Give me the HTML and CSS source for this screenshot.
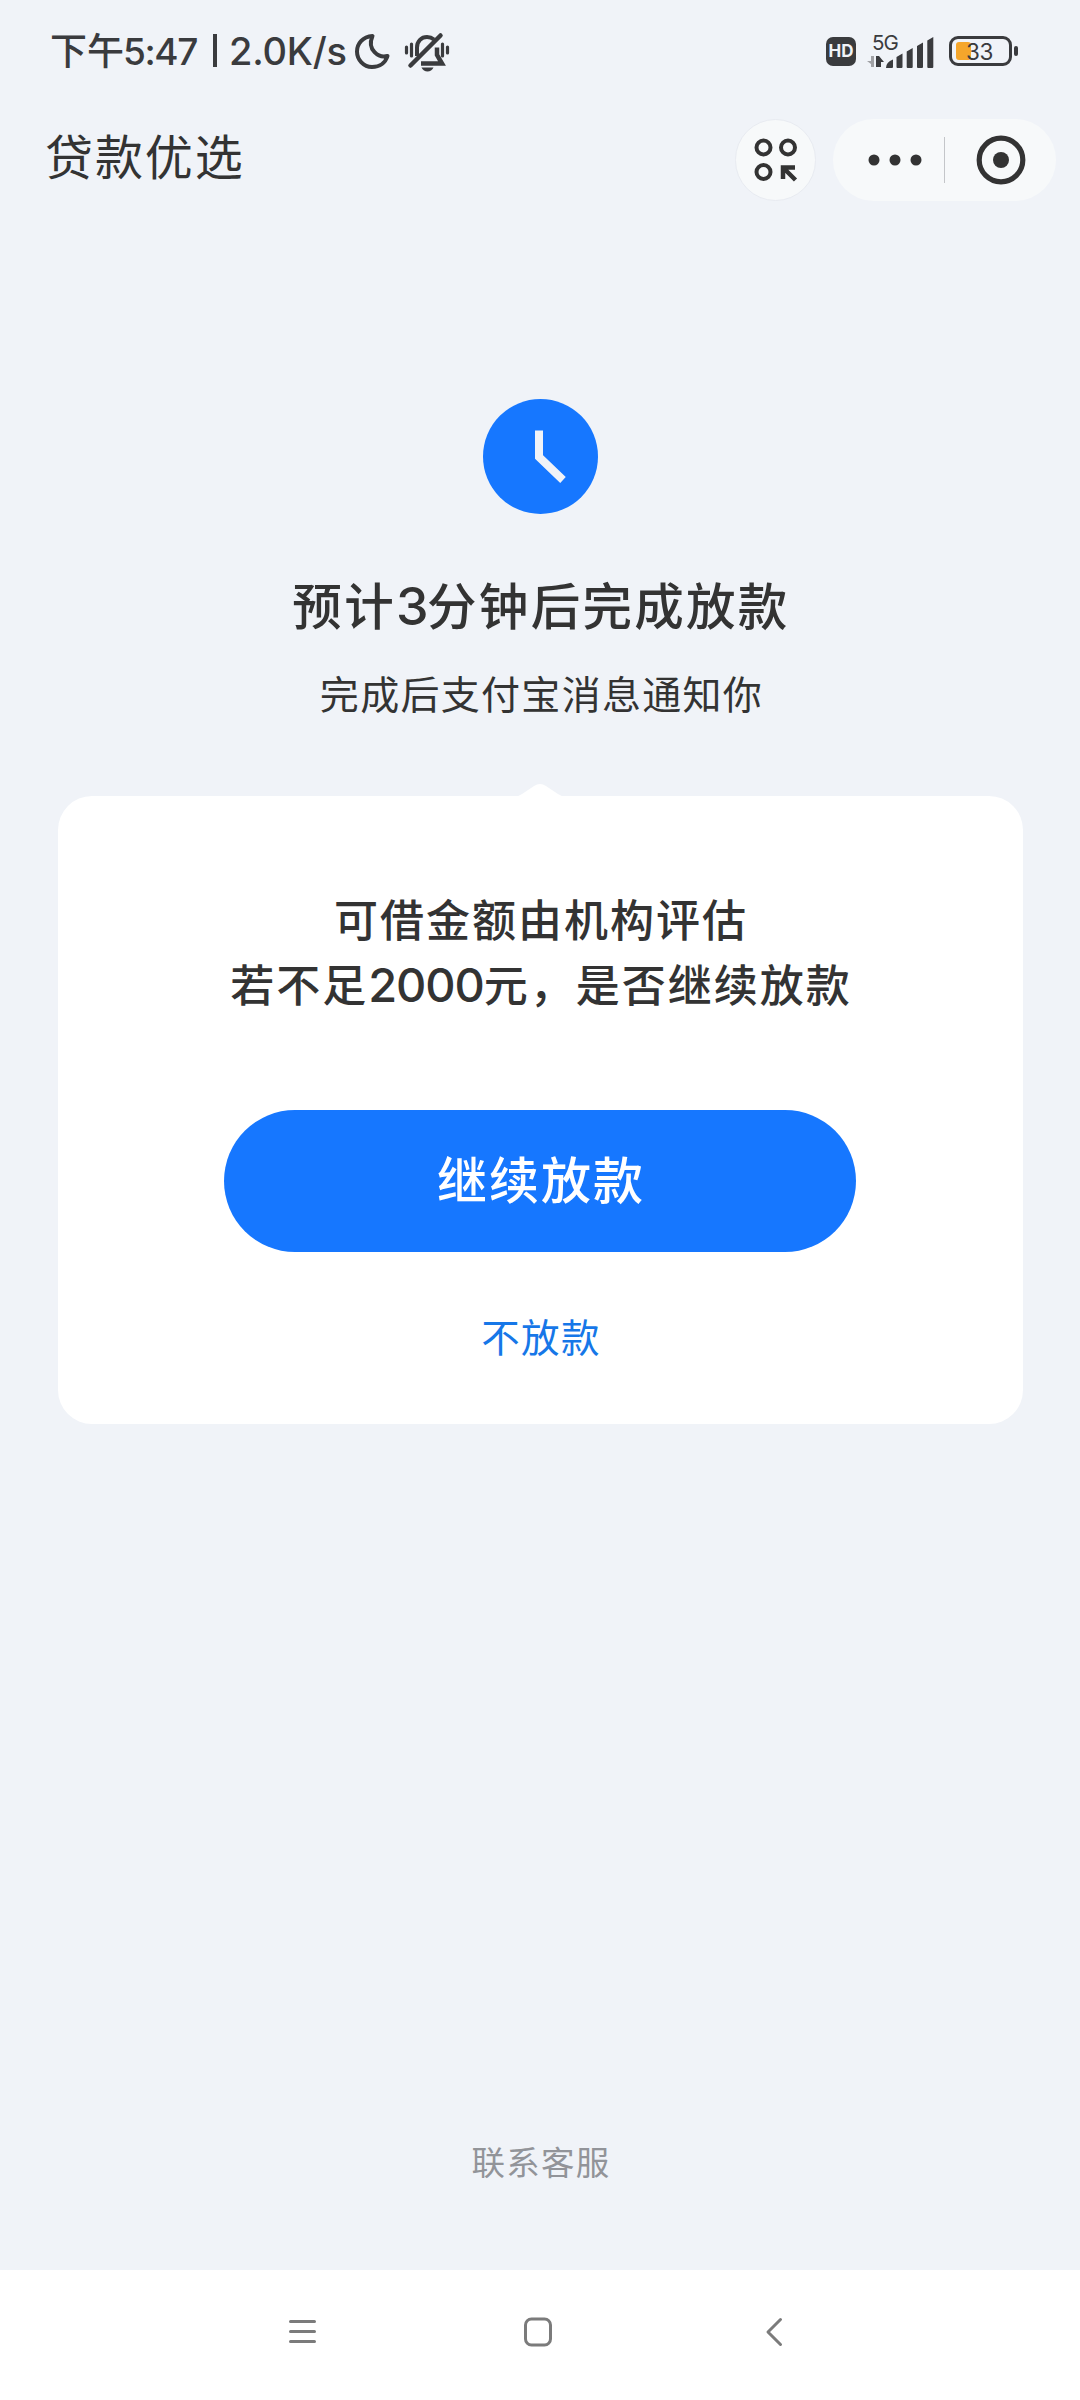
FILE: index.html
```html
<!DOCTYPE html>
<html lang="zh-CN">
<head>
<meta charset="utf-8">
<title>贷款优选</title>
<link rel="stylesheet" href="styles.css">
</head>
<body>
<div class="screen">
  <div class="status">
    <div class="status-left">
      <span class="ampm">下午</span><span class="time">5:47</span><span class="bar"></span><span class="speed">2.0K/s</span>
      <svg class="moon" width="36" height="38" viewBox="0 0 36 38"><path d="M18.500 4C8.500 4.500 3 12 3 19.500A15.500 15.500 0 0 0 18 35c8 0 13.500-4.500 15.500-11C25 26.500 12.500 18 18.500 4Z" fill="none" stroke="#3a3b3e" stroke-width="4" stroke-linejoin="round"/></svg>
      <svg class="bell" width="46" height="40" viewBox="0 0 46 40"><g fill="none" stroke="#3a3b3e" stroke-width="4"><path d="M6.500 33.500 36.500 3.500" stroke-width="4.500" stroke-linecap="round"/><path d="M13 24V15.500C13 9 17.500 5 23 5q4 0 7 2.500"/><path d="M33 15.500V23l5 8.500H17" stroke-width="4.500"/><path d="M2.500 15v6M7.500 12v12M38.500 12v12M43.500 15v6" stroke-width="3.200" stroke-linecap="round"/></g><path d="M17.500 35.500h12q-2 4-6 4t-6-4Z" fill="#3a3b3e"/></svg>
    </div>
    <div class="status-right">
      <span class="hd">HD</span>
      <div class="signal">
        <span class="net">5G</span>
        <svg width="68" height="36" viewBox="0 0 68 36"><path d="M7 23v11H4v-3L0 28h4v-5Z" fill="#a0a1a5"/><path d="M9 34V23h3l5 6h-3v5Z" fill="#3a3b3e"/><path d="M19 35q0-6 7-8.500V34q0 1-1 1ZM29.500 24l6-3.500V34q0 1-1 1h-4q-1 0-1-1ZM39.700 18.500l6-3.500V34q0 1-1 1h-4q-1 0-1-1ZM50 13l6-3.500V34q0 1-1 1h-4q-1 0-1-1ZM60.300 7.500l6-3.500V34q0 1-1 1h-4q-1 0-1-1Z" fill="#3a3b3e"/></svg>
      </div>
      <div class="battery"><span class="level"></span><span class="pct">33</span><span class="nub"></span></div>
    </div>
  </div>
  <header class="header">
    <h1 class="title">贷款优选</h1>
    <div class="actions">
      <button class="round"><svg width="44" height="44" viewBox="0 0 44 44"><g fill="none" stroke="#333" stroke-width="4"><circle cx="9.500" cy="9.500" r="7"/><circle cx="34" cy="9.500" r="7"/><circle cx="9.500" cy="34" r="7"/><path d="M29 41V29.500H41M29.500 30 41.500 42" stroke-width="4.500"/></g></svg></button>
      <div class="capsule">
        <svg width="54" height="12" viewBox="0 0 54 12" fill="#333"><circle cx="6" cy="6" r="5.500"/><circle cx="27" cy="6" r="5.500"/><circle cx="48" cy="6" r="5.500"/></svg>
        <span class="divider"></span>
        <svg width="50" height="50" viewBox="0 0 50 50"><circle cx="25" cy="25" r="21.800" fill="none" stroke="#333" stroke-width="5.200"/><circle cx="25" cy="25" r="8" fill="#333"/></svg>
      </div>
    </div>
  </header>
  <main class="main">
    <svg class="clock" width="115" height="115" viewBox="0 0 115 115"><circle cx="57.500" cy="57.500" r="57.500" fill="#1677ff"/><path d="M56 31.500V58l24 23" fill="none" stroke="#f0f3f8" stroke-width="8"/></svg>
    <h2 class="heading">预计<span class="num">3</span>分钟后完成放款</h2>
    <p class="sub">完成后支付宝消息通知你</p>
    <section class="card">
      <svg class="notch" width="54" height="14" viewBox="0 0 54 14"><path d="M0 14q5 0 9-3L21 3q6-4 12 0l12 8q4 3 9 3Z" fill="#fff"/></svg>
      <p class="question">可借金额由机构评估<br>若不足<span class="amount">2000</span>元，是否继续放款</p>
      <button class="primary">继续放款</button>
      <a class="decline">不放款</a>
    </section>
    <a class="service">联系客服</a>
  </main>
  <nav class="nav">
    <svg width="28" height="30" viewBox="0 0 28 30" stroke="#7b7b7b" stroke-width="3" stroke-linecap="round"><path d="M1.500 4.500H25.500M1.500 14.500H25.500M1.500 24.500H25.500"/></svg>
    <svg class="home" width="28" height="30" viewBox="0 0 28 30"><rect x="1.500" y="2" width="25" height="26" rx="6" fill="none" stroke="#7b7b7b" stroke-width="3"/></svg>
    <svg width="18" height="30" viewBox="0 0 18 30"><path d="M15.500 2.500 3 15l12.500 12.500" fill="none" stroke="#7b7b7b" stroke-width="3" stroke-linecap="round" stroke-linejoin="round"/></svg>
  </nav>
</div>
</body>
</html>
```
FILE: styles.css
```css
* { box-sizing: border-box; }
body { margin: 0; background: #f0f3f8; color: #333; font-family: "Noto Sans CJK SC", sans-serif; }
h1, h2, p { margin: 0; font-weight: 400; }
button { border: 0; padding: 0; font-family: inherit; }
svg { display: block; flex: none; }
.screen { width: 1080px; height: 2400px; display: flex; flex-direction: column; background: #f0f3f8; }
.status { height: 104px; display: flex; justify-content: space-between; padding: 0 61px 4px 50px; color: #3a3b3e; }
.status-left, .status-right { display: flex; align-items: center; white-space: nowrap; }
.status-right { padding-top: 2px; }
.ampm { width: 73px; padding-bottom: 3px; font-size: 37px; font-weight: 500; line-height: 50px; }
.time { width: 90px; padding-top: 2px; font-family: Inter, sans-serif; font-size: 37px; font-weight: 500; letter-spacing: -1.400px; }
.bar { width: 4px; height: 33px; background: #3a3b3e; }
.speed { width: 137px; padding-left: 12px; padding-top: 2px; font-family: Inter, sans-serif; font-size: 38px; font-weight: 500; letter-spacing: -0.2px; }
.moon { margin-top: 2px; }
.bell { margin-left: 14px; margin-top: 4px; }
.hd { width: 30px; height: 29px; border-radius: 7px; background: #3a3b3e; color: #f0f3f8; font: 700 17px/29px Inter, sans-serif; text-align: center; }
.signal { position: relative; width: 68px; margin: 0 14px 0 11px; }
.net { position: absolute; left: 5px; top: 0; font: 400 20.500px/20px Inter, sans-serif; letter-spacing: -1px; }
.battery { position: relative; width: 63px; height: 30px; border: 3px solid #3a3b3e; border-radius: 9px; margin-right: 7px; }
.level { position: absolute; left: 4px; top: 3px; width: 15px; height: 18px; border-radius: 3px; background: #f5a62b; }
.pct { position: absolute; left: 14px; top: 1px; font: 400 22.500px/23px Inter, sans-serif; letter-spacing: -0.500px; }
.nub { position: absolute; right: -9px; top: 7px; width: 4px; height: 10px; border-radius: 2px; background: #3a3b3e; }
.header { height: 112px; display: flex; justify-content: space-between; align-items: center; padding: 0 24px 0 45px; }
.title { font-size: 48px; line-height: 70px; letter-spacing: 1.9px; padding-bottom: 12px; }
.actions { display: flex; gap: 17px; }
.round { width: 81px; height: 82px; border-radius: 41px; background: #f7f9fa; border: 1px solid #e8ebf1; display: flex; align-items: center; justify-content: center; }
.capsule { width: 223px; height: 82px; border-radius: 41px; background: #f7f9fa; display: flex; align-items: center; padding-left: 35px; }
.divider { width: 1px; height: 46px; background: #c4c6c9; margin: 0 31px 0 22px; }
.main { flex: 1; display: flex; flex-direction: column; align-items: center; padding-top: 183px; }
.heading { margin-top: 54px; padding-left: 2px; font-size: 49.500px; font-weight: 500; line-height: 72px; letter-spacing: 2.300px; }
.num { font-family: Inter, sans-serif; font-size: 52px; font-weight: 450; line-height: 0; letter-spacing: -1.500px; }
.sub { margin-top: 24px; padding-left: 3px; font-size: 39px; line-height: 56px; letter-spacing: 1.300px; }
.card { position: relative; width: 965px; height: 628px; margin-top: 76px; border-radius: 34px; background: #fff; display: flex; flex-direction: column; align-items: center; padding-top: 90px; }
.notch { position: absolute; top: -13px; left: 455px; }
.question { padding-left: 2px; font-size: 44px; font-weight: 500; line-height: 65px; letter-spacing: 2px; text-align: center; }
.amount { font-family: Inter, sans-serif; font-size: 47px; font-weight: 450; line-height: 0; letter-spacing: -1.100px; }
.primary { width: 632px; height: 142px; margin-top: 94px; padding: 0 0 8px 2px; border-radius: 71px; background: #1677ff; color: #fff; font-size: 50px; font-weight: 500; letter-spacing: 2px; line-height: 72px; }
.decline { margin-top: 55px; padding-left: 2px; color: #1677e8; font-size: 38.5px; line-height: 56px; letter-spacing: 1.300px; }
.service { margin-top: auto; margin-bottom: 85px; padding-left: 2px; color: #929499; font-size: 33.5px; line-height: 48px; letter-spacing: 1.300px; }
.nav { height: 130px; background: #fff; display: flex; align-items: center; justify-content: space-between; padding: 0 297px 6px 289px; }
.home { margin-right: 7px; }
```
